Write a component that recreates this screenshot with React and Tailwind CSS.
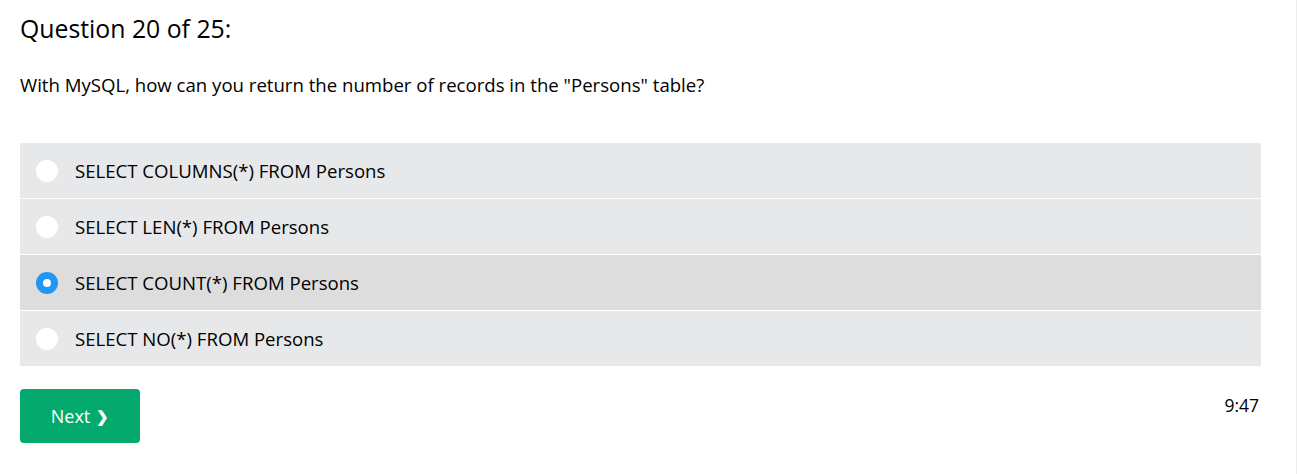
import { useState } from "react";

const options = [
  "SELECT COLUMNS(*) FROM Persons",
  "SELECT LEN(*) FROM Persons",
  "SELECT COUNT(*) FROM Persons",
  "SELECT NO(*) FROM Persons",
];

const App = () => {
  const [selected, setSelected] = useState(2);

  return (
    <div className="min-h-[474px] bg-white border-r border-[#ececec] font-['Open_Sans',sans-serif] text-black">
      <div className="px-5 pt-[11px] w-[1281px]">
        {/* Heading */}
        <h3 className="text-[24.8px] leading-[34px]">Question 20 of 25:</h3>
        <p className="mt-[27px] text-[18.6px] leading-[26px]">
          With MySQL, how can you return the number of records in the "Persons" table?
        </p>

        {/* Options */}
        <div className="mt-[45px] flex flex-col gap-px">
          {options.map((opt, i) => (
            <label
              key={opt}
              onClick={() => setSelected(i)}
              className={`flex items-center h-[55px] pl-[16px] cursor-pointer ${
                selected === i ? "bg-[#dddddd]" : "bg-[#e7e8ea]"
              }`}
            >
              {selected === i ? (
                <span className="w-[22px] h-[22px] rounded-full bg-[#2196f3] flex items-center justify-center">
                  <span className="w-[8px] h-[8px] rounded-full bg-white" />
                </span>
              ) : (
                <span className="w-[22px] h-[22px] rounded-full bg-white" />
              )}
              <span className="ml-[17px] text-[18.6px]">{opt}</span>
            </label>
          ))}
        </div>

        {/* Footer */}
        <div className="mt-[23px] flex justify-between items-start">
          <button className="w-[120px] h-[54px] rounded-[4px] bg-[#04aa6d] text-white text-[18px] flex items-center justify-center gap-[6px]">
            Next <span className="font-bold text-[15px]">❯</span>
          </button>
          <span className="mt-[3px] text-[17.5px] mr-[2px]">9:47</span>
        </div>
      </div>
    </div>
  );
};

export default App;
